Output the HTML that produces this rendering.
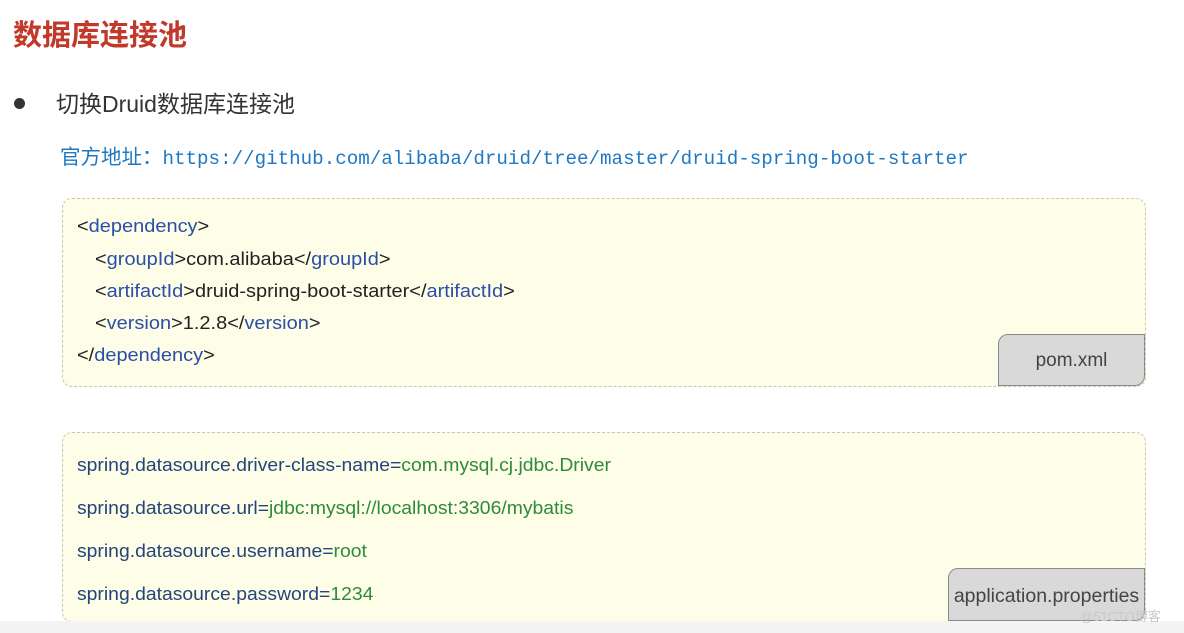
<!DOCTYPE html>
<html><head><meta charset="utf-8">
<style>
body{margin:0;width:1184px;height:633px;background:#fff;position:relative;overflow:hidden;font-family:"Liberation Sans","Noto Sans CJK SC",sans-serif;}
.abs{position:absolute;white-space:nowrap;}
.title{left:13px;top:12px;font-size:29px;font-weight:bold;color:#c0392b;font-family:"Noto Sans CJK SC",sans-serif;}
.bullet{left:14px;top:98px;width:11px;height:11px;border-radius:50%;background:#333;}
.sub{left:56px;top:85px;font-size:23px;color:#333;font-family:"Liberation Sans","Noto Sans CJK SC",sans-serif;}
.url{left:60px;top:140px;font-size:20.5px;color:#1f78c1;}
.url .m{font-family:"Liberation Mono",monospace;font-size:19.2px;}
.box{position:absolute;left:62px;width:1082px;background:#fefde8;border:1px dashed #c9c9b0;border-radius:10px;}
.tab{position:absolute;background:#d9d9d9;border:1px solid #8a8a8a;border-radius:10px 0 10px 0;color:#444;text-align:center;box-sizing:border-box;}
.code{font-size:18px;color:#222;transform:scaleX(1.11);transform-origin:0 0;}
.b{color:#2b4ea6;}
.g{color:#2e8b3a;}
.p{font-size:18px;color:#24457a;transform:scaleX(1.075);transform-origin:0 0;}
.foot{left:0;top:621px;width:1184px;height:12px;background:#f4f4f4;}
</style></head><body>
<div class="abs title">数据库连接池</div>
<div class="abs bullet"></div>
<div class="abs sub">切换Druid数据库连接池</div>
<div class="abs url">官方地址：<span class="m">https://github.com/alibaba/druid/tree/master/druid-spring-boot-starter</span></div>

<div class="box" style="top:198px;height:187px;"></div>
<div class="abs code" style="left:77px;top:216px;">&lt;<span class="b">dependency</span>&gt;</div>
<div class="abs code" style="left:95px;top:249px;">&lt;<span class="b">groupId</span>&gt;com.alibaba&lt;/<span class="b">groupId</span>&gt;</div>
<div class="abs code" style="left:95px;top:281px;">&lt;<span class="b">artifactId</span>&gt;druid-spring-boot-starter&lt;/<span class="b">artifactId</span>&gt;</div>
<div class="abs code" style="left:95px;top:313px;">&lt;<span class="b">version</span>&gt;1.2.8&lt;/<span class="b">version</span>&gt;</div>
<div class="abs code" style="left:77px;top:345px;">&lt;/<span class="b">dependency</span>&gt;</div>
<div class="tab" style="left:998px;top:334px;width:147px;height:52px;line-height:52px;font-size:19px;">pom.xml</div>

<div class="box" style="top:432px;height:188px;"></div>
<div class="abs p" style="left:77px;top:455px;">spring.datasource.driver-class-name=<span class="g">com.mysql.cj.jdbc.Driver</span></div>
<div class="abs p" style="left:77px;top:498px;">spring.datasource.url=<span class="g">jdbc:mysql://localhost:3306/mybatis</span></div>
<div class="abs p" style="left:77px;top:541px;">spring.datasource.username=<span class="g">root</span></div>
<div class="abs p" style="left:77px;top:584px;">spring.datasource.password=<span class="g">1234</span></div>
<div class="tab" style="left:948px;top:568px;width:197px;height:53px;line-height:54px;font-size:19.5px;">application.properties</div>
<div class="abs foot"></div>
<div class="abs" style="left:1080px;top:606px;font-size:13px;color:#c8c8c8;">@51CTO博客</div>
</body></html>
